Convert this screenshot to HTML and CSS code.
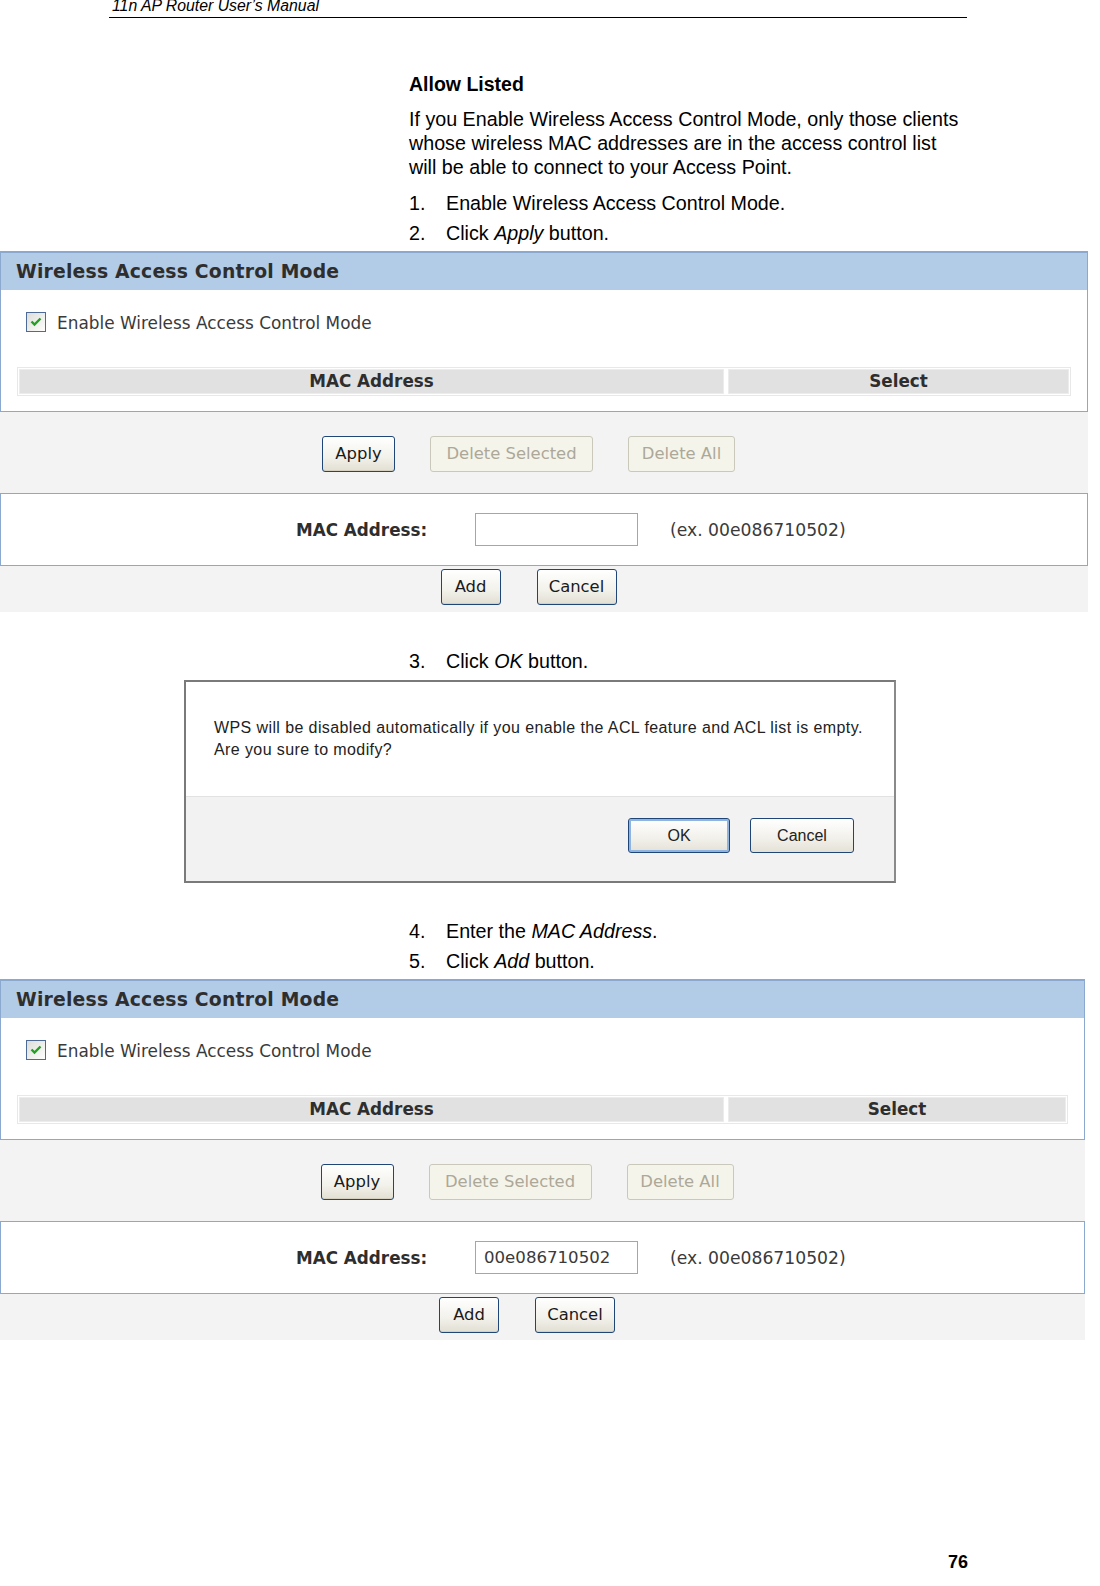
FILE: index.html
```html
<!DOCTYPE html>
<html>
<head>
<meta charset="utf-8">
<link rel="stylesheet" href="styles.css">
</head>
<body>
<div class="runhead"><span>11n AP Router User’s Manual</span></div>

<div class="doc">
  <h2 class="title">Allow Listed</h2>
  <p class="para">If you Enable Wireless Access Control Mode, only those clients<br>whose wireless MAC addresses are in the access control list<br>will be able to connect to your Access Point.</p>
  <div class="step"><span class="num">1.</span><span>Enable Wireless Access Control Mode.</span></div>
  <div class="step"><span class="num">2.</span><span>Click <i>Apply</i> button.</span></div>
</div>

<div class="shot">
  <div class="panel">
    <div class="panel-head">Wireless Access Control Mode</div>
    <div class="panel-body">
      <div class="checkrow">
        <svg class="cb" width="20" height="20" viewBox="0 0 20 20"><defs><linearGradient id="g1" x1="0" y1="0" x2="1" y2="1"><stop offset="0" stop-color="#dcdcd7"/><stop offset="1" stop-color="#ffffff"/></linearGradient></defs><rect x="0.5" y="0.5" width="19" height="19" fill="url(#g1)" stroke="#4d6b96"/><path d="M5.5 9.5 L8.5 12.5 L14.5 6.5" fill="none" stroke="#21a121" stroke-width="2.4"/></svg>
        <span>Enable Wireless Access Control Mode</span>
      </div>
      <div class="tbl">
        <div class="th th-mac">MAC Address</div>
        <div class="th th-sel">Select</div>
      </div>
    </div>
  </div>
  <div class="graybar g1">
    <span class="btn">Apply</span>
    <span class="btn dis">Delete Selected</span>
    <span class="btn dis">Delete All</span>
  </div>
  <div class="macbox">
    <span class="maclabel">MAC Address:</span>
    <span class="inp"></span>
    <span class="ex">(ex. 00e086710502)</span>
  </div>
  <div class="graybar g2">
    <span class="btn b-add">Add</span>
    <span class="btn b-cancel">Cancel</span>
  </div>
</div>

<div class="doc">
  <div class="step s3"><span class="num">3.</span><span>Click <i>OK</i> button.</span></div>
</div>

<div class="dialog">
  <div class="dlg-msg">WPS will be disabled automatically if you enable the ACL feature and ACL list is empty.<br>Are you sure to modify?</div>
  <div class="dlg-foot">
    <span class="dbtn ok">OK</span>
    <span class="dbtn">Cancel</span>
  </div>
</div>

<div class="doc">
  <div class="step s4"><span class="num">4.</span><span>Enter the <i>MAC Address</i>.</span></div>
  <div class="step"><span class="num">5.</span><span>Click <i>Add</i> button.</span></div>
</div>

<div class="shot narrow">
  <div class="panel">
    <div class="panel-head">Wireless Access Control Mode</div>
    <div class="panel-body">
      <div class="checkrow">
        <svg class="cb" width="20" height="20" viewBox="0 0 20 20"><defs><linearGradient id="g2" x1="0" y1="0" x2="1" y2="1"><stop offset="0" stop-color="#dcdcd7"/><stop offset="1" stop-color="#ffffff"/></linearGradient></defs><rect x="0.5" y="0.5" width="19" height="19" fill="url(#g2)" stroke="#4d6b96"/><path d="M5.5 9.5 L8.5 12.5 L14.5 6.5" fill="none" stroke="#21a121" stroke-width="2.4"/></svg>
        <span>Enable Wireless Access Control Mode</span>
      </div>
      <div class="tbl">
        <div class="th th-mac">MAC Address</div>
        <div class="th th-sel">Select</div>
      </div>
    </div>
  </div>
  <div class="graybar g1">
    <span class="btn">Apply</span>
    <span class="btn dis">Delete Selected</span>
    <span class="btn dis">Delete All</span>
  </div>
  <div class="macbox">
    <span class="maclabel">MAC Address:</span>
    <span class="inp">00e086710502</span>
    <span class="ex">(ex. 00e086710502)</span>
  </div>
  <div class="graybar g2">
    <span class="btn b-add">Add</span>
    <span class="btn b-cancel">Cancel</span>
  </div>
</div>

<div class="pageno">76</div>
</body>
</html>
```

FILE: styles.css
```css
html, body { margin: 0; padding: 0; background: #fff; }
body { width: 1100px; height: 1586px; overflow: hidden; font-family: "Liberation Sans", Arial, sans-serif; color: #000; }

.runhead { margin-left: 109px; width: 858px; height: 17px; border-bottom: 1px solid #000; box-sizing: content-box; }
.runhead span { display: block; padding-left: 3px; font-style: italic; font-size: 15.8px; line-height: 12px; }

.doc { margin-left: 409px; font-size: 19.7px; }
.title { margin: 54px 0 0; font-size: 19.5px; font-weight: bold; line-height: 24px; }
.para { margin: 11px 0 0; line-height: 24px; }
.step { display: flex; line-height: 30px; margin-top: 0; }
.step:first-of-type { margin-top: 9px; }
.num { width: 37px; flex: none; }
.s3 { margin-top: 34px !important; }
.s4 { margin-top: 33px !important; }

.shot { width: 1088px; margin-top: 3px; font-family: "DejaVu Sans", Verdana, sans-serif; color: #333; }
.shot.narrow { width: 1085px; }

.panel { border: 1px solid #8ba8cf; border-top-width: 2px; background: #fff; }
.panel-head { height: 37px; line-height: 37px; background: #b2cbe6; padding-left: 15px; font-weight: bold; font-size: 18.8px; color: #2e2e2e; letter-spacing: 0.2px; }
.panel-body { padding: 22px 16px 15px; }
.checkrow { display: flex; align-items: center; gap: 11px; padding-left: 9px; height: 20px; font-size: 16.9px; color: #3a3a3a; }
.cb { flex: none; }
.checkrow span { position: relative; top: 1px; }
.tbl { display: flex; gap: 4px; margin-top: 35px; border: 1px solid #e8e8e8; padding: 1px; }
.th { height: 23px; line-height: 23px; background: #e1e1e1; border: 1px solid #ececec; text-align: center; font-weight: bold; font-size: 16.8px; color: #2e2e2e; }
.th-mac { flex: 0 0 703px; }
.th-sel { flex: 1 1 auto; }

.graybar { background: #f3f3f3; display: flex; justify-content: center; padding-right: 31px; }
.g1 { height: 81px; align-items: flex-start; padding-top: 24px; box-sizing: border-box; gap: 35px; }
.g2 { height: 46px; padding-top: 3px; box-sizing: border-box; gap: 36px; }

.btn { display: inline-block; height: 36px; line-height: 34px; box-sizing: border-box; border: 1px solid #1f4677; border-radius: 3px; background: linear-gradient(#ffffff, #f2f1ea 60%, #e2dfd3); padding: 0 12px; font-size: 16.4px; color: #1a1a1a; box-shadow: inset 0 -1px 0 #d6d0c0; }
.btn:first-child { width: 73px; padding: 0; text-align: center; }
.btn.dis { border-color: #cac8bb; background: #f5f4ea; color: #aca899; box-shadow: none; }
.g1 .btn.dis:nth-child(2) { width: 163px; padding: 0; text-align: center; }
.g1 .btn.dis:nth-child(3) { width: 107px; padding: 0; text-align: center; }
.b-add { width: 60px !important; padding: 0; text-align: center; }
.b-cancel { width: 80px; padding: 0; text-align: center; }

.macbox { height: 73px; box-sizing: border-box; border: 1px solid #8ba8cf; background: #fff; display: flex; align-items: center; padding-left: 295px; font-size: 16.8px; }
.maclabel { font-weight: bold; color: #2e2e2e; width: 179px; flex: none; }
.inp { width: 163px; height: 33px; box-sizing: border-box; border: 1px solid #90a9cc; flex: none; line-height: 31px; padding-left: 8px; color: #3a3a3a; font-size: 16.6px; }
.ex { margin-left: 32px; color: #3a3a3a; font-size: 17.2px; }

.dialog { margin: 4px 0 0 184px; width: 712px; height: 203px; box-sizing: border-box; border: 2px solid #7a7a7a; border-right-color: #8a8a8a; display: flex; flex-direction: column; background: #fff; }
.dlg-msg { height: 114px; box-sizing: border-box; padding: 35px 0 0 28px; font-size: 16px; line-height: 22px; color: #222; letter-spacing: 0.4px; }
.dlg-foot { flex: 1; background: #f2f2f2; border-top: 1px solid #e2e2e2; display: flex; justify-content: flex-end; gap: 20px; padding: 21px 40px 0 0; }
.dbtn { width: 104px; height: 35px; box-sizing: border-box; border: 1px solid #1f4677; border-radius: 3px; background: linear-gradient(#ffffff, #f1f0ea 60%, #e4e1d6); text-align: center; line-height: 33px; font-size: 16px; color: #222; }
.dbtn.ok { width: 102px; box-shadow: inset 0 0 0 2px #8fb4e0; }

.pageno { margin: 212px 0 0 948px; font-weight: bold; font-size: 18px; line-height: 20px; }
```
